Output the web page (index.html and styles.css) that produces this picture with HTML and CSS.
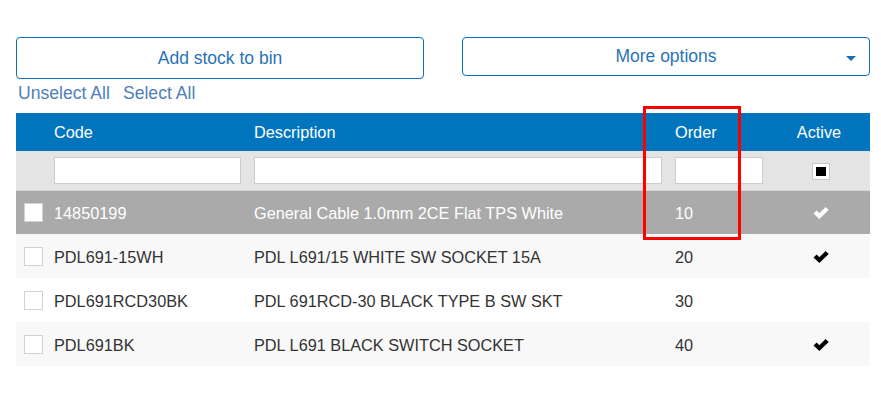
FILE: index.html
```html
<!DOCTYPE html>
<html lang="en">
<head>
    <meta charset="UTF-8">
    <title>Stock bin</title>
    <link rel="stylesheet" href="styles.css">
</head>
<body>
    <div class="page">
        <div class="actions">
            <button class="btn btn-add">Add stock to bin</button>
            <button class="btn btn-more">More options <span class="caret"></span></button>
        </div>
        <div class="select-links">
            <a href="#">Unselect All</a>
            <a href="#">Select All</a>
        </div>

        <div class="grid-wrap">
            <table class="grid">
                <colgroup>
                    <col class="c-check">
                    <col class="c-code">
                    <col class="c-desc">
                    <col class="c-order">
                    <col class="c-active">
                </colgroup>
                <thead>
                    <tr class="head">
                        <th></th>
                        <th>Code</th>
                        <th>Description</th>
                        <th>Order</th>
                        <th class="center">Active</th>
                    </tr>
                    <tr class="filter">
                        <th></th>
                        <th><input type="text"></th>
                        <th><input type="text"></th>
                        <th><input type="text" class="short"></th>
                        <th class="center"><span class="tri"></span></th>
                    </tr>
                </thead>
                <tbody>
                    <tr class="selected">
                        <td><span class="box"></span></td>
                        <td>14850199</td>
                        <td>General Cable 1.0mm 2CE Flat TPS White</td>
                        <td>10</td>
                        <td class="center"><svg class="tick" viewBox="0 0 17 12"><path d="M0.5 6.6 L3.6 3.6 L6.3 6.3 L12.6 0 L15.7 3 L6.3 12 Z"/></svg></td>
                    </tr>
                    <tr class="alt">
                        <td><span class="box"></span></td>
                        <td>PDL691-15WH</td>
                        <td>PDL L691/15 WHITE SW SOCKET 15A</td>
                        <td>20</td>
                        <td class="center"><svg class="tick" viewBox="0 0 17 12"><path d="M0.5 6.6 L3.6 3.6 L6.3 6.3 L12.6 0 L15.7 3 L6.3 12 Z"/></svg></td>
                    </tr>
                    <tr>
                        <td><span class="box"></span></td>
                        <td>PDL691RCD30BK</td>
                        <td>PDL 691RCD-30 BLACK TYPE B SW SKT</td>
                        <td>30</td>
                        <td class="center"></td>
                    </tr>
                    <tr class="alt">
                        <td><span class="box"></span></td>
                        <td>PDL691BK</td>
                        <td>PDL L691 BLACK SWITCH SOCKET</td>
                        <td>40</td>
                        <td class="center"><svg class="tick" viewBox="0 0 17 12"><path d="M0.5 6.6 L3.6 3.6 L6.3 6.3 L12.6 0 L15.7 3 L6.3 12 Z"/></svg></td>
                    </tr>
                </tbody>
            </table>
            <!-- highlight drawn over the Order column -->
            <div class="highlight"></div>
        </div>
    </div>
</body>
</html>
```

FILE: styles.css
```css
* {
    box-sizing: border-box;
}

body {
    font-family: "Liberation Sans", Arial, sans-serif;
    background-color: #ffffff;
    margin: 0;
    padding: 0;
}

.page {
    width: 854px;
    margin-left: 16px;
    padding-top: 37px;
}

/* top buttons */
.actions {
    display: flex;
    justify-content: space-between;
    align-items: flex-start;
}

.btn {
    position: relative;
    width: 408px;
    background-color: #ffffff;
    border: 1px solid #0f6fb5;
    border-radius: 4px;
    color: #2a72b8;
    font-family: inherit;
    font-size: 17.5px;
    padding: 0;
    cursor: pointer;
}

.btn-add {
    height: 42px;
    padding-top: 1px;
}

.btn-more {
    height: 39px;
}

.caret {
    position: absolute;
    right: 13px;
    top: 18px;
    width: 0;
    height: 0;
    border-left: 5px solid transparent;
    border-right: 5px solid transparent;
    border-top: 5px solid #1a6fb3;
}

.select-links {
    display: flex;
    gap: 13px;
    padding: 4px 0 0 2px;
    height: 34px;
}

.select-links a {
    color: #4f80b9;
    font-size: 17.6px;
    text-decoration: none;
}

/* grid */
.grid-wrap {
    position: relative;
}

.grid {
    width: 854px;
    border-collapse: collapse;
    table-layout: fixed;
    font-size: 16.3px;
    color: #333333;
}

.c-check { width: 38px; }
.c-code { width: 200px; }
.c-desc { width: 421px; }
.c-order { width: 97px; }
.c-active { width: 98px; }

.grid th, .grid td {
    padding: 0;
    text-align: left;
    font-weight: normal;
    vertical-align: middle;
    white-space: nowrap;
}

.grid .center {
    text-align: center;
}

.head {
    background-color: #0075be;
    color: #ffffff;
    height: 38px;
}

.head th.center {
    padding-right: 4px;
}

.filter {
    background-color: #e4e4e4;
    height: 39px;
}

.filter input {
    display: block;
    width: calc(100% - 13px);
    height: 27px;
    border: 1px solid #cccccc;
    background: #ffffff;
    margin: 0;
    padding: 0 4px;
}

.filter input.short {
    width: calc(100% - 9px);
}

.tri {
    display: inline-block;
    width: 18px;
    height: 17px;
    background: #ffffff;
    border: 1px solid #c9c9c9;
    padding: 3px;
    vertical-align: middle;
}

.tri::after {
    content: "";
    display: block;
    width: 100%;
    height: 100%;
    background: #000000;
}

.grid tbody tr {
    height: 44px;
    background-color: #ffffff;
}

.grid tbody td {
    padding-top: 3px;
}

.grid tbody tr.alt {
    background-color: #f8f8f8;
}

.grid tbody tr.selected {
    background-color: #aaaaaa;
    color: #ffffff;
    border-top: 1px solid #d6d6d6;
}

.box {
    display: block;
    width: 19px;
    height: 19px;
    margin-left: 8px;
    margin-top: -2px;
    background: #ffffff;
    border: 1px solid #d2d2d2;
}

.tick {
    display: inline-block;
    width: 17px;
    height: 12px;
    fill: #000000;
    vertical-align: middle;
    margin-left: 0;
    margin-top: -3px;
}

.selected .tick {
    fill: #ffffff;
}

.highlight {
    position: absolute;
    left: 627px;
    top: -7px;
    width: 98px;
    height: 134px;
    border: 3px solid #ff0000;
}
```
